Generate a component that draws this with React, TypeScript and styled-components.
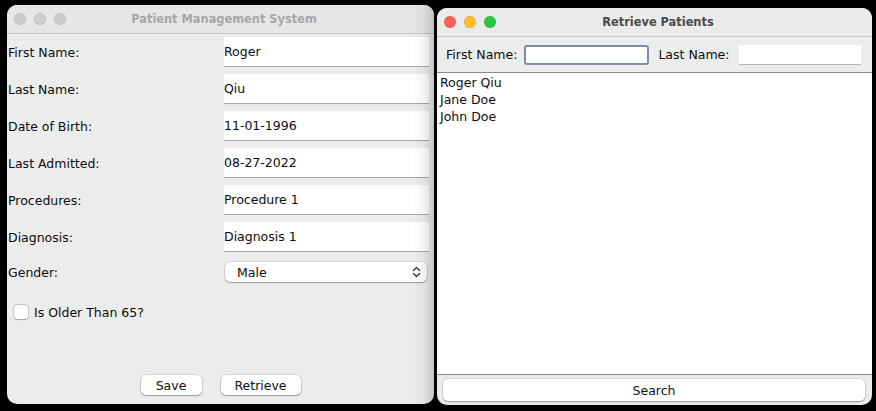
import React from "react";
import styled, { createGlobalStyle } from "styled-components";

const GlobalStyle = createGlobalStyle`
  html, body {
    margin: 0;
    padding: 0;
    background: #000;
  }
  body {
    font-family: "DejaVu Sans", "Liberation Sans", sans-serif;
    font-size: 12px;
    color: #0d0d0d;
  }
  * {
    box-sizing: border-box;
  }
`;

const Desktop = styled.div`
  display: flex;
  align-items: flex-start;
  gap: 3px;
  width: 876px;
  height: 411px;
  padding: 5px 0 0 7px;
  background: #000;
`;

const Window = styled.div<{ $width: number; $height: number; $top?: number }>`
  position: relative;
  display: flex;
  flex-direction: column;
  width: ${({ $width }) => $width}px;
  height: ${({ $height }) => $height}px;
  margin-top: ${({ $top }) => $top || 0}px;
  background: #ececec;
  border-radius: 10px;
  overflow: hidden;
`;

// shadow cast by the front window onto the one behind it
const EdgeShade = styled.div`
  position: absolute;
  top: 0;
  right: 0;
  bottom: 0;
  width: 22px;
  pointer-events: none;
  background: linear-gradient(
    to right,
    rgba(0, 0, 0, 0) 0%,
    rgba(0, 0, 0, 0.04) 50%,
    rgba(0, 0, 0, 0.16) 100%
  );
`;

const TitleBar = styled.div<{ $active?: boolean }>`
  display: grid;
  grid-template-columns: 1fr auto 1fr;
  align-items: center;
  height: 29px;
  flex-shrink: 0;
  padding-left: 7px;
  border-bottom: 1px solid #c8c8c8;
  background: ${({ $active }) => ($active ? "#ebebeb" : "#e6e6e6")};
`;

const Lights = styled.div`
  display: flex;
  gap: 8px;
`;

const Light = styled.span<{ $color: string; $ring: string }>`
  width: 12px;
  height: 12px;
  border-radius: 50%;
  background: ${({ $color }) => $color};
  box-shadow: inset 0 0 0 0.5px ${({ $ring }) => $ring};
`;

const Title = styled.div<{ $active?: boolean }>`
  font-weight: bold;
  font-size: 11.4px;
  color: ${({ $active }) => ($active ? "#4a4a4a" : "#a6a6a6")};
`;

const FormGrid = styled.div`
  display: grid;
  grid-template-columns: 1fr 205px;
  grid-template-rows: repeat(6, 30px) 26px 40px;
  row-gap: 7px;
  padding: 3px 5px 0 1px;
  align-items: center;
`;

const Label = styled.label`
  font-size: 12.5px;
`;

const TextField = styled.div`
  height: 30px;
  display: flex;
  align-items: center;
  padding-left: 0;
  background: #fff;
  border-bottom: 1px solid #a8a8a8;
  font-size: 12.5px;
`;

const Combo = styled.div`
  display: flex;
  align-items: center;
  justify-content: space-between;
  height: 20px;
  margin-left: 1px;
  width: 202px;
  padding: 0 6px 0 12px;
  background: #fff;
  border-radius: 5px;
  box-shadow: 0 0 0 0.5px rgba(0, 0, 0, 0.18), 0 1px 1.5px rgba(0, 0, 0, 0.28);
  font-size: 12.5px;
`;

const CheckRow = styled.div`
  grid-column: 1 / span 2;
  display: flex;
  align-items: center;
  gap: 6px;
  padding-left: 6px;
  font-size: 12.5px;
`;

const CheckBox = styled.span`
  width: 14px;
  height: 14px;
  border-radius: 3px;
  background: #fff;
  box-shadow: 0 0 0 0.5px rgba(0, 0, 0, 0.3), 0 0.5px 1px rgba(0, 0, 0, 0.2);
`;

const Spacer = styled.div`
  flex: 1;
`;

const ButtonRow = styled.div`
  display: flex;
  justify-content: center;
  gap: 19px;
  padding-bottom: 9px;
`;

const Button = styled.button<{ $width?: number; $height?: number }>`
  width: ${({ $width }) => ($width ? `${$width}px` : "100%")};
  height: ${({ $height }) => $height || 20}px;
  border: none;
  border-radius: 5px;
  background: #fff;
  font-family: inherit;
  font-size: 12.5px;
  color: #111;
  box-shadow: 0 0 0 0.5px rgba(0, 0, 0, 0.16), 0 1px 1.5px rgba(0, 0, 0, 0.3);
  padding: 0;
`;

const SearchBar = styled.div`
  display: flex;
  align-items: center;
  height: 35px;
  padding: 0 0 0 9px;
  font-size: 12.5px;
`;

const SearchLabel = styled.span<{ $gap: number }>`
  margin-right: ${({ $gap }) => $gap}px;
`;

const SearchField = styled.div<{ $width: number; $focused?: boolean; $after?: number }>`
  width: ${({ $width }) => $width}px;
  height: 20px;
  margin-right: ${({ $after }) => $after || 0}px;
  background: #fff;
  border-radius: ${({ $focused }) => ($focused ? "3px" : "0")};
  border: ${({ $focused }) => ($focused ? "2.5px solid #7b8ea5" : "none")};
  border-bottom: ${({ $focused }) =>
    $focused ? "2.5px solid #7b8ea5" : "1px solid #b4b4b4"};
`;

const ResultList = styled.ul`
  flex: 1;
  margin: 0;
  padding: 1px 0 0 3px;
  list-style: none;
  background: #fff;
  border-top: 1px solid #8c8c8c;
  border-bottom: 1px solid #8c8c8c;
  font-size: 12.5px;
`;

const ResultItem = styled.li`
  height: 17px;
  line-height: 17px;
`;

const Footer = styled.div`
  padding: 4px 7px 4px 6px;
`;

const ChevronIcon = () => (
  <svg width="9" height="12" viewBox="0 0 9 12">
    <path
      d="M1.5 4.5 L4.5 1.5 L7.5 4.5 M1.5 7.5 L4.5 10.5 L7.5 7.5"
      fill="none"
      stroke="#333"
      strokeWidth="1.3"
      strokeLinecap="round"
      strokeLinejoin="round"
    />
  </svg>
);

const fields = [
  { label: "First Name:", value: "Roger" },
  { label: "Last Name:", value: "Qiu" },
  { label: "Date of Birth:", value: "11-01-1996" },
  { label: "Last Admitted:", value: "08-27-2022" },
  { label: "Procedures:", value: "Procedure 1" },
  { label: "Diagnosis:", value: "Diagnosis 1" },
];

const patients = ["Roger Qiu", "Jane Doe", "John Doe"];

const inactiveLight = { $color: "#cdcdcd", $ring: "rgba(0,0,0,0.12)" };

export default function App() {
  return (
    <>
      <GlobalStyle />
      <Desktop>
        <Window $width={427} $height={399}>
          <TitleBar>
            <Lights>
              <Light {...inactiveLight} />
              <Light {...inactiveLight} />
              <Light {...inactiveLight} />
            </Lights>
            <Title>Patient Management System</Title>
            <span />
          </TitleBar>
          <FormGrid>
            {fields.map((f) => (
              <React.Fragment key={f.label}>
                <Label>{f.label}</Label>
                <TextField>{f.value}</TextField>
              </React.Fragment>
            ))}
            <Label>Gender:</Label>
            <Combo>
              <span>Male</span>
              <ChevronIcon />
            </Combo>
            <CheckRow>
              <CheckBox />
              <span>Is Older Than 65?</span>
            </CheckRow>
          </FormGrid>
          <Spacer />
          <ButtonRow>
            <Button $width={61}>Save</Button>
            <Button $width={80}>Retrieve</Button>
          </ButtonRow>
          <EdgeShade />
        </Window>

        <Window $width={435} $height={397} $top={3}>
          <TitleBar $active>
            <Lights>
              <Light $color="#fe5f57" $ring="rgba(0,0,0,0.12)" />
              <Light $color="#febc2e" $ring="rgba(0,0,0,0.12)" />
              <Light $color="#28c840" $ring="rgba(0,0,0,0.12)" />
            </Lights>
            <Title $active>Retrieve Patients</Title>
            <span />
          </TitleBar>
          <SearchBar>
            <SearchLabel $gap={7}>First Name:</SearchLabel>
            <SearchField $width={125} $focused $after={9} />
            <SearchLabel $gap={10}>Last Name:</SearchLabel>
            <SearchField $width={122} />
          </SearchBar>
          <ResultList>
            {patients.map((p) => (
              <ResultItem key={p}>{p}</ResultItem>
            ))}
          </ResultList>
          <Footer>
            <Button $height={22}>Search</Button>
          </Footer>
        </Window>
      </Desktop>
    </>
  );
}
